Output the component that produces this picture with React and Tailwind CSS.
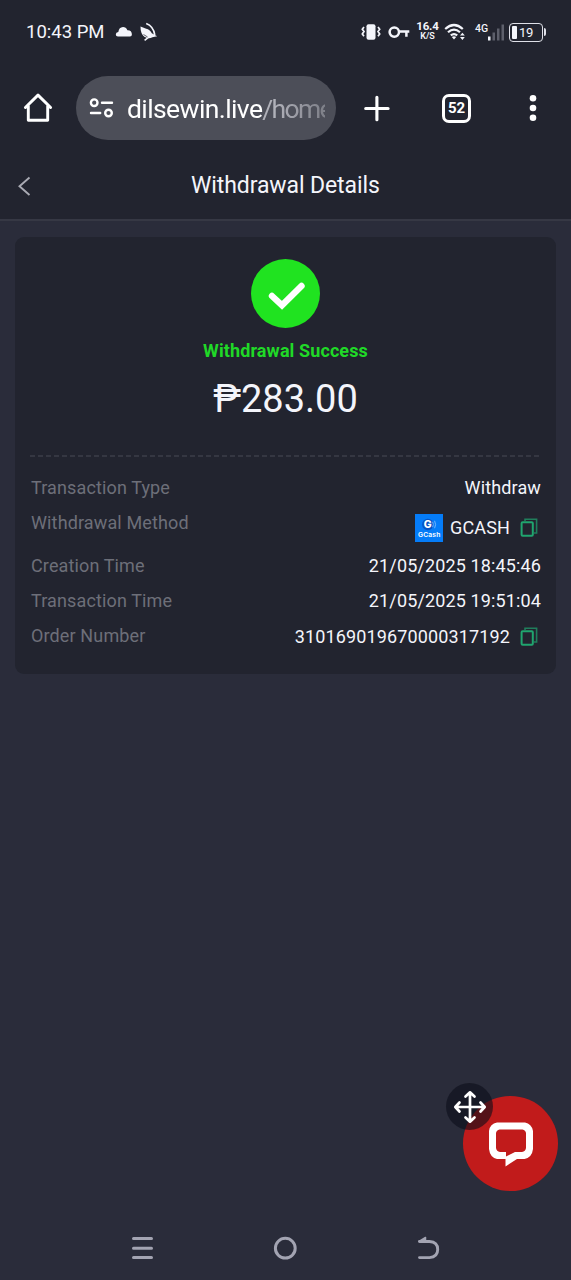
const CopyIcon = () => (
	<svg width="18" height="20" viewBox="0 0 18 20" fill="none" stroke="#20a56f">
		<path d="M5 3V1.2H16.6V15H14" strokeWidth="1.6" opacity="0.7" />
		<rect x="1.6" y="4.2" width="11.2" height="13.6" rx="1" strokeWidth="2" />
	</svg>
);

const GcashLogo = () => (
	<svg width="28" height="28" viewBox="0 0 28 28" fontFamily="Inter, sans-serif">
		<rect width="28" height="28" fill="#057cf8" />
		<circle cx="12.8" cy="10.5" r="5.7" fill="#0554c4" />
		<text x="8.8" y="14.3" fontSize="10.5" fontWeight="800" fill="#fff">
			G
		</text>
		<path d="M17.6 7.8q1.4 2.7 0 5.4M19.6 6.8q2 3.7 0 7.4" fill="none" stroke="#7fbcff" strokeWidth=".9" />
		<text x="3" y="23.4" fontSize="6.4" fontWeight="600" fill="#fff" textLength="22.5" lengthAdjust="spacingAndGlyphs">
			GCash
		</text>
	</svg>
);

const StatusBar = () => {
	return (
		<div className="flex h-16 items-center justify-between pl-[26px] pr-[25px]">
			<div className="flex items-center">
				<span className="w-[79px] whitespace-nowrap pt-px text-[18.5px]">10:43 PM</span>
				{/* weather + bird notification */}
				<svg className="ml-[10px]" width="18" height="12" viewBox="0 0 18 12" fill="#f4f5fb">
					<path d="M3 10.5Q.8 10.5 .8 8.5Q.8 6.2 3.3 6Q4 1.2 8 1Q11 1 12.4 4.2Q16.8 4 16.9 8.6Q16.9 10.5 15 10.5Z" />
				</svg>
				<svg className="ml-[6px]" width="20" height="20" viewBox="0 0 20 20" fill="#f4f5fb">
					<path d="M1.5 4.5L7.2 6.8Q10.8 7.5 12.8 11.2L18.2 14.2L13.4 15.3Q9.5 17.4 5.3 14.8Q1.4 11.5 1.5 4.5Z" />
					<path d="M7.2 1.6Q14.4 4.3 15.8 13M5.6 18.3L10.4 14.6" fill="none" stroke="#f4f5fb" strokeWidth="1.6" />
					<path d="M4.5 12.5L8.6 15" stroke="#22242f" strokeWidth=".7" />
				</svg>
			</div>
			<div className="flex items-center">
				<svg width="21" height="18" viewBox="0 0 21 18" fill="none" stroke="#f4f5fb">
					<rect x="5.5" y="1.2" width="9" height="15.6" rx="2" fill="#f4f5fb" stroke="none" />
					<path d="M3 4L1.3 6.3L3 8.6L1.3 10.9L3 13.2M17 4L18.7 6.3L17 8.6L18.7 10.9L17 13.2" strokeWidth="1.7" />
				</svg>
				<svg className="ml-[6px]" width="22" height="14" viewBox="0 0 22 14" fill="none" stroke="#f4f5fb" strokeWidth="2.5">
					<circle cx="6.3" cy="7.1" r="4.7" />
					<path d="M11 6.5H21.3M18.4 6.5V11.8" />
				</svg>
				<div className="ml-[6px] flex w-[23px] flex-col items-center pb-[3px] font-bold">
					<span className="text-[11.5px] leading-[11px] tracking-[-0.2px]">16.4</span>
					<span className="text-[9px] font-semibold leading-[9px]">K/S</span>
				</div>
				<svg className="ml-[5px]" width="22" height="18" viewBox="0 0 22 18" fill="none" stroke="#f4f5fb" strokeWidth="2.2">
					<path d="M1.2 6Q10 -2 18.8 6M4 9.3Q10 3.8 16 9.3M6.8 12.4Q10 9.7 13.2 12.4" />
					<path d="M7.8 14Q10 12.4 12.2 14L10 16.5Z" fill="#f4f5fb" stroke="none" />
					<path d="M18.4 9.8L20.8 12.6H16ZM18.4 17L20.8 14H16Z" fill="#f4f5fb" stroke="none" />
				</svg>
				<div className="ml-[9px] flex h-[18px] items-start">
					<span className="w-[13px] whitespace-nowrap pt-px text-[10.5px] font-medium leading-[10px]">4G</span>
					<svg width="17" height="18" viewBox="0 0 17 18" fill="#5d5f6b">
						<rect x="0" y="13.5" width="2.5" height="4" fill="#f4f5fb" />
						<rect x="4.5" y="9.5" width="2.5" height="8" />
						<rect x="9" y="5.5" width="2.5" height="12" />
						<rect x="13.5" y="1.5" width="2.5" height="16" />
					</svg>
				</div>
				{/* battery */}
				<div className="ml-[4px] flex items-center">
					<div className="flex h-[19px] w-[34px] items-center rounded-[4px] border-[1.5px] border-[#dfe0e8] pl-[2px]">
						<div className="h-[13px] w-[5px] rounded-[1px] bg-[#f4f5fb]" />
						<span className="ml-[2px] text-[13px] leading-none tracking-[-0.2px]">19</span>
					</div>
					<div className="ml-px h-[8px] w-[2px] rounded-r bg-[#dfe0e8]" />
				</div>
			</div>
		</div>
	);
};

const BrowserBar = () => {
	return (
		<div className="flex h-[88px] items-center pl-[23px]">
			<svg width="30" height="30" viewBox="0 0 30 30" fill="none" stroke="#fff" strokeWidth="2.9" strokeLinejoin="round" strokeLinecap="round">
				<path d="M2.4 14.5L15 2.1L27.6 14.5M5.3 13V27.2H24.7V13" />
			</svg>
			<div className="ml-[23px] flex h-16 w-[260px] items-center rounded-full bg-[#4c4e58] pl-[13px]">
				<svg width="25" height="22" viewBox="0 0 25 22" fill="none" stroke="#fff" strokeWidth="2.4" strokeLinecap="round">
					<circle cx="5.2" cy="5.7" r="3.3" />
					<path d="M13 5.7H23M2 16H11.2" />
					<circle cx="19.5" cy="16" r="3.3" />
				</svg>
				<div className="ml-[13px] w-[198px] overflow-hidden whitespace-nowrap pt-[2px] text-[26.5px] tracking-[-0.6px] text-white [mask-image:linear-gradient(to_right,black_75%,transparent_125%)]">
					dilsewin.live<span className="tracking-[-1.7px] text-[#b0b1b9]">/home</span>
				</div>
			</div>
			<svg className="ml-[27px]" width="27" height="27" viewBox="0 0 27 27" stroke="#fff" strokeWidth="3.1" strokeLinecap="round">
				<path d="M2.7 13.5H25.1M13.9 2.3V24.7" />
			</svg>
			<div className="ml-[52px] flex size-[29px] items-center justify-center rounded-[7px] border-[3px] border-white text-[15px] font-bold text-white">
				52
			</div>
			<svg className="ml-[57px]" width="10" height="28" viewBox="0 0 10 28" fill="#fff">
				<circle cx="5" cy="4.3" r="3.3" />
				<circle cx="5" cy="14" r="3.3" />
				<circle cx="5" cy="23.7" r="3.3" />
			</svg>
		</div>
	);
};

const Row = ({ label, children }) => (
	<div className="flex min-h-[35px] items-start justify-between">
		<span className="pl-px leading-[35px] text-[#6d6f79]">{label}</span>
		<div className="flex items-center leading-[35px] text-[#f4f5fb]">{children}</div>
	</div>
);

const App = () => {
	return (
		<div className="flex h-[1280px] w-[571px] flex-col bg-[#2a2c3a] font-[Roboto,sans-serif] text-[#f4f5fb]">
			<header className="h-[221px] border-b-2 border-[#363844] bg-[#22242f]">
				<StatusBar />
				<BrowserBar />
				<div className="flex h-[67px] items-center pl-[17px]">
					<svg width="14" height="20" viewBox="0 0 14 20" fill="none" stroke="#a9aab3" strokeWidth="1.9">
						<path d="M12.5 1.5L2.5 10.2L12.5 19" />
					</svg>
					<h1 className="ml-[160px] text-[23px] leading-[28px] tracking-[-0.1px]">Withdrawal Details</h1>
				</div>
			</header>

			<main className="flex-1 px-[15px] pt-[16px]">
				<div className="h-[437px] rounded-[9px] bg-[#22242f] px-[15px] pt-[22px]">
					<div className="flex flex-col items-center">
						<svg width="69" height="69" viewBox="0 0 69 69" fill="none">
							<circle cx="34.5" cy="34.5" r="34.5" fill="#20e320" />
							<path d="M21 37L31 46.3L50.5 27" stroke="#fff" strokeWidth="6.4" strokeLinecap="round" />
						</svg>
						<p className="mt-[11px] text-[18px] font-bold leading-[24px] tracking-[0.1px] text-[#20d927]">Withdrawal Success</p>
						<p className="mt-[13px] text-[38px] leading-[46px]">₱283.00</p>
					</div>
					<svg className="mt-[33px] block" width="511" height="2" viewBox="0 0 511 2">
						<path d="M0 1H511" stroke="#3c3e49" strokeWidth="1.5" strokeDasharray="5 3" />
					</svg>

					<div className="mt-[13px] text-[18px] tracking-[0.13px]">
						<Row label="Transaction Type">Withdraw</Row>
						<div className="h-[43px]">
							<Row label="Withdrawal Method">
								<div className="flex h-[45px] items-center pr-[3px]">
									<GcashLogo />
									<span className="ml-[7px] mr-[10px]">GCASH</span>
									<CopyIcon />
								</div>
							</Row>
						</div>
						<Row label="Creation Time">21/05/2025 18:45:46</Row>
						<Row label="Transaction Time">21/05/2025 19:51:04</Row>
						<Row label="Order Number">
							<div className="flex items-center pr-[3px] pt-px">
								<span className="mr-[10px]">310169019670000317192</span>
								<CopyIcon />
							</div>
						</Row>
					</div>
				</div>
			</main>

			{/* live chat bubble with its drag handle */}
			<div className="absolute left-[463px] top-[1096px] flex size-[95px] items-center justify-center rounded-full bg-[#c11b1b]">
				<svg width="46" height="46" viewBox="0 0 46 46">
					<path
						fillRule="evenodd"
						fill="#fff"
						d="M9 1.5H37Q43.5 2.5 45 10V28Q44 36.5 36.5 38H29L17.5 45.5V38H9Q2 36.5 1 28V10Q2 2.5 9 1.5ZM11.5 8.5Q8.5 9 8 12V27Q8.5 30.5 12 31H18V35.5L27 31H34Q37.5 30.5 38 27V12Q37.5 9 34.5 8.5Z"
					/>
				</svg>
			</div>
			<div className="absolute left-[446px] top-[1083px] flex size-[47px] items-center justify-center rounded-full bg-[#0c0e19]/60">
				<svg width="34" height="34" viewBox="0 0 34 34" fill="none" stroke="#fff" strokeWidth="2.7" strokeLinecap="round" strokeLinejoin="round">
					<path d="M2.5 17H31.5M17 2.5V31.5M12.5 6.5L17 2.3L21.5 6.5M12.5 27.5L17 31.7L21.5 27.5M6.5 12.5L2.3 17L6.5 21.5M27.5 12.5L31.7 17L27.5 21.5" />
				</svg>
			</div>

			<nav className="flex h-[64px] items-center pl-[131px]">
				<svg width="23" height="24" viewBox="0 0 23 24" stroke="#a3a4b2" strokeWidth="3" strokeLinecap="round">
					<path d="M2.5 2.5H20.5M2.5 12.2H20.5M2.5 21.6H20.5" />
				</svg>
				<svg className="ml-[119px]" width="24" height="24" viewBox="0 0 24 24" fill="none" stroke="#a3a4b2" strokeWidth="3">
					<circle cx="12.3" cy="12.2" r="9.9" />
				</svg>
				<svg className="ml-[120px]" width="24" height="24" viewBox="0 0 24 24" fill="none" stroke="#a3a4b2" strokeWidth="2.9" strokeLinecap="round" strokeLinejoin="round">
					<path d="M2.5 5.5H12.5Q20.7 6 20.7 13.5Q20.7 21 12.5 21.6H2.5" />
					<path d="M2 5.5L8.5 1.5V5.5Z" fill="#a3a4b2" strokeWidth="1.5" />
				</svg>
			</nav>
		</div>
	);
};

export default App;
